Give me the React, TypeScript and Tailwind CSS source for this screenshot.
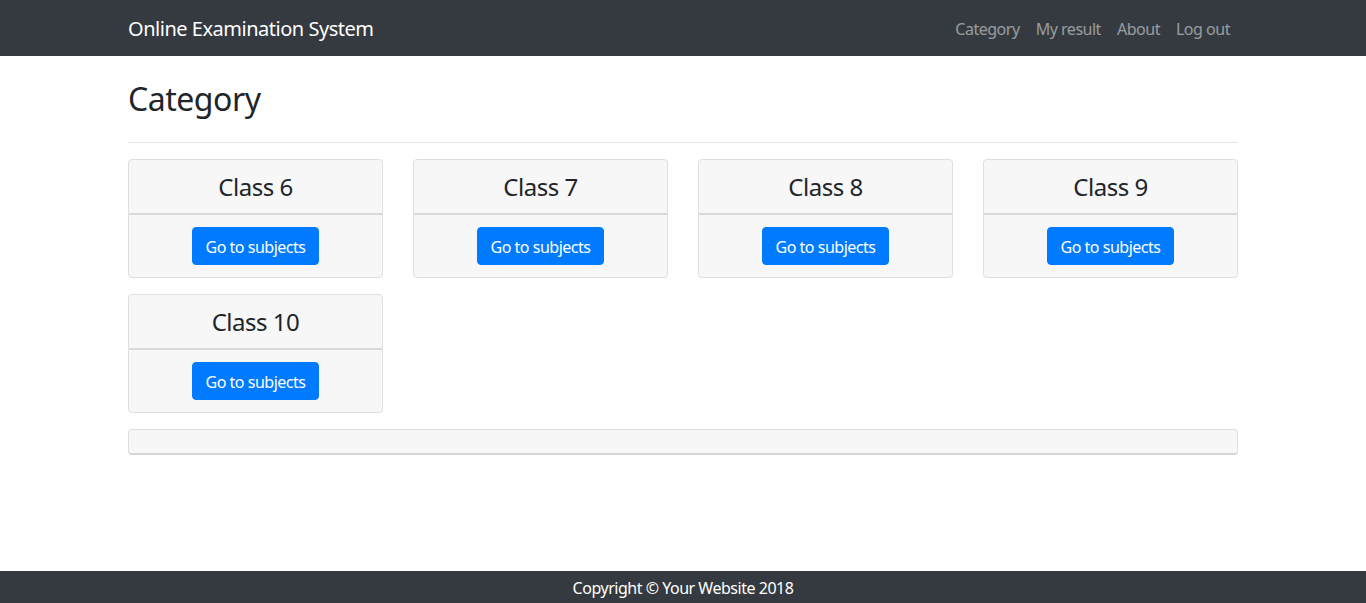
import React from "react";

const classes = ["Class 6", "Class 7", "Class 8", "Class 9", "Class 10"];

function Card({ title }: { title: string }) {
  return (
    <div className="mb-4 rounded-[4px] border border-[#dfdfdf] bg-[#f7f7f7]">
      <div className="border-b-2 border-[#d9d9d9] px-5 pt-[13px] pb-[11px] text-center">
        <h4 className="text-[24px] leading-[28.8px] text-[#212529]">{title}</h4>
      </div>
      <div className="p-3 text-center">
        <button className="rounded-[4px] border border-[#007bff] bg-[#007bff] px-3 pt-[7px] pb-[5px] text-[16px] leading-6 text-white">
          Go to subjects
        </button>
      </div>
    </div>
  );
}

export default function App() {
  return (
    <div
      className="flex h-screen flex-col bg-white text-[#212529] tracking-[-0.03em]"
      style={{ fontFamily: '"Noto Sans", "Open Sans", sans-serif' }}
    >
      <nav className="h-14 bg-[#343a40]">
        <div className="mx-auto flex h-full w-[1140px] items-center justify-between px-[15px]">
          <a className="pt-[2px] text-[20px] leading-[30px] text-white">Online Examination System</a>
          <ul className="flex pt-[2px]">
            {["Category", "My result", "About", "Log out"].map((t) => (
              <li key={t}>
                <a className="block px-2 py-2 text-[16px] leading-6 text-white/50">{t}</a>
              </li>
            ))}
          </ul>
        </div>
      </nav>
      <main className="flex-1">
        <div className="mx-auto w-[1140px] px-[15px]">
          <h2 className="mt-6 mb-0 text-[32px] leading-[38.4px] font-normal">Category</h2>
          <hr className="mt-6 mb-4 border-t border-black/10" />
          <div className="grid grid-cols-4 gap-x-[30px]">
            {classes.map((c) => (
              <Card key={c} title={c} />
            ))}
          </div>
          <div className="h-[26px] rounded-[4px] border border-[#dfdfdf] border-b-2 border-b-[#d5d5d5] bg-[#f7f7f7]" />
        </div>
      </main>
      <footer className="h-8 bg-[#343a40] pt-[1px] text-center text-[16px] leading-8 text-white">
        Copyright © Your Website 2018
      </footer>
    </div>
  );
}
